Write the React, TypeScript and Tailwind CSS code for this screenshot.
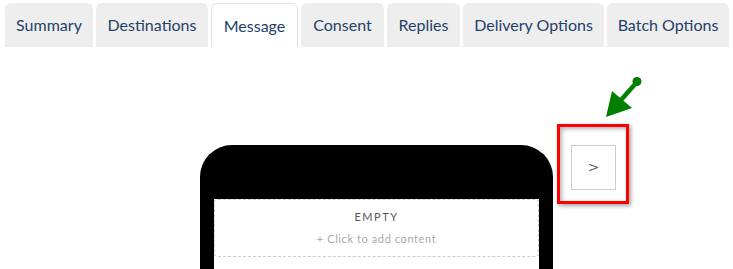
import React from "react";

const tabs = [
  { label: "Summary", w: "w-[88px]" },
  { label: "Destinations", w: "w-[112px]" },
  { label: "Message", w: "w-[87px]", active: true },
  { label: "Consent", w: "w-[83px]" },
  { label: "Replies", w: "w-[73px]" },
  { label: "Delivery Options", w: "w-[141px]" },
  { label: "Batch Options", w: "w-[122px]" },
];

const GreenArrow = () => (
  <svg className="absolute left-[595px] top-[70px]" width="55" height="55" viewBox="595 70 55 55">
    <line x1="637" y1="82" x2="621" y2="100" stroke="#008000" strokeWidth="4.5" />
    <circle cx="637" cy="81.5" r="4.5" fill="#008000" />
    <polygon points="606,117 612,91 632,108" fill="#008000" />
  </svg>
);

export default function App() {
  return (
    <div className="relative w-[733px] h-[269px] overflow-hidden bg-white" style={{ fontFamily: "Lato, 'Open Sans', sans-serif" }}>
      <div className="flex gap-[3px] pl-[5px] pt-[3px]">
        {tabs.map((t) => (
          <div
            key={t.label}
            className={`${t.w} h-[44px] flex items-center justify-center rounded-t-[6px] text-[16px] text-[#24416a] ${
              t.active ? "bg-white border border-b-0 border-[#e2e2e2]" : "bg-[#eeeeee]"
            }`}
          >
            {t.label}
          </div>
        ))}
      </div>

      <div className="flex items-start pl-[200px] mt-[98px]">
        <div className="w-[353px] h-[200px] bg-black rounded-t-[32px] pt-[54px] px-[14px]">
          <div className="bg-white h-full">
            <div className="h-[58px] border border-dashed border-[#cccccc] rounded-[4px] flex flex-col items-center pt-[9px]">
              <div className="text-[11px] tracking-[1.5px] text-[#555555] leading-[16px]">EMPTY</div>
              <div className="text-[11px] tracking-[0.6px] text-[#aaaaaa] leading-[14px] mt-[7px]">+ Click to add content</div>
            </div>
          </div>
        </div>

        <div className="relative ml-[18px]">
          <div className="w-[45px] h-[45px] border border-[#cccccc] bg-white flex items-center justify-center text-[14px] text-[#666666]" style={{ fontFamily: "'DejaVu Sans', sans-serif" }}>
            &gt;
          </div>
          <div className="absolute left-[-14px] top-[-21px] w-[72px] h-[80px] border-[3px] border-[#ff0000] shadow-[2px_2px_4px_rgba(0,0,0,0.35),inset_2px_2px_4px_rgba(0,0,0,0.3)]" />
        </div>
      </div>

      <GreenArrow />
    </div>
  );
}
